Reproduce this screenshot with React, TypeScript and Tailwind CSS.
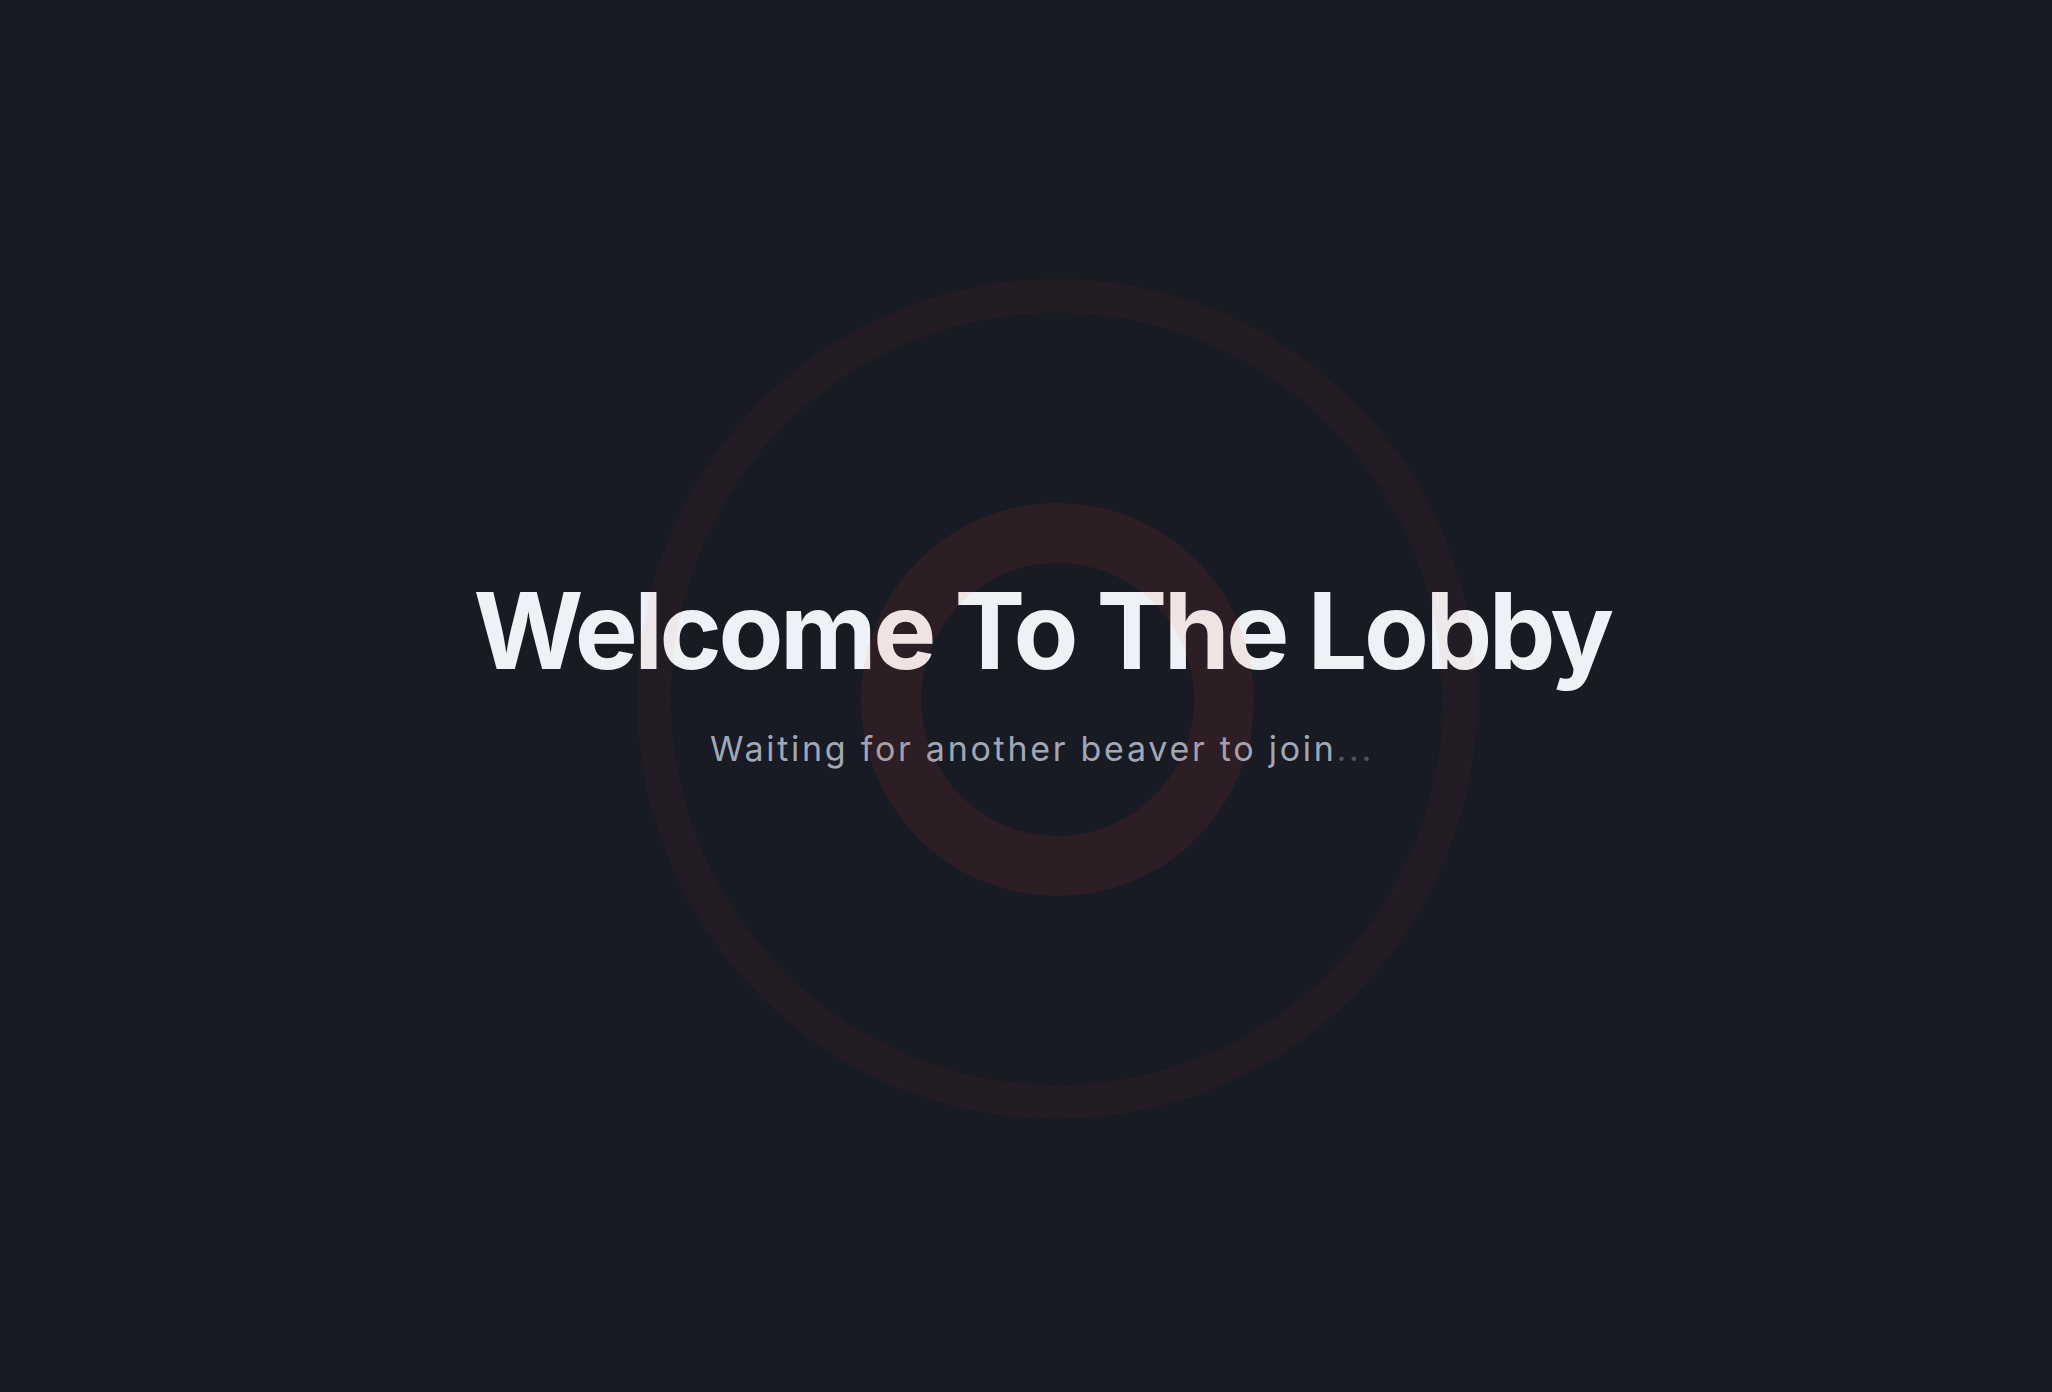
export default function App() {
  return (
    <div className="relative h-screen w-full overflow-hidden bg-[#181a24]" style={{ fontFamily: "Inter, 'Noto Sans', sans-serif" }}>
      {/* centred content */}
      <div className="flex h-full flex-col items-center justify-center pb-12 pl-8">
        <h1 className="text-[106px] font-bold leading-none tracking-[-0.033em] text-[#eef2f7]">
          Welcome To The Lobby
        </h1>
        <p className="mt-12 text-[34px] leading-none tracking-[0.08em] text-[#a0a7b5]">
          Waiting for another beaver to join
          <span className="text-[#4f535e]">...</span>
        </p>
      </div>

      {/* pulse rings, drawn over the text */}
      <div className="pointer-events-none absolute left-[637px] top-[279px] h-[840px] w-[840px] rounded-full border-[34px] border-[rgba(255,74,40,0.055)]" />
      <div className="pointer-events-none absolute left-[861px] top-[503px] h-[393px] w-[393px] rounded-full border-[60px] border-[rgba(255,74,40,0.09)]" />
    </div>
  );
}
